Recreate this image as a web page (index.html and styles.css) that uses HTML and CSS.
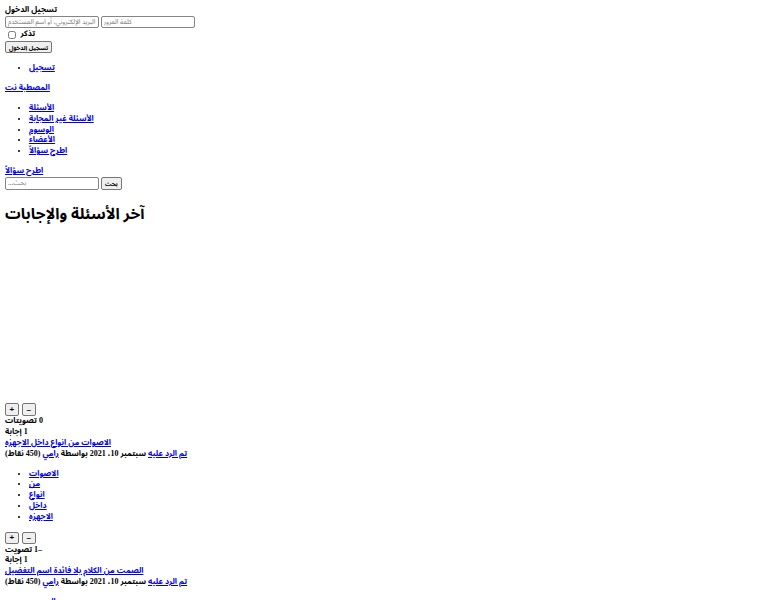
FILE: index.html
```html
<!DOCTYPE html>
<html lang="ar">
<head>
    <meta charset="UTF-8">
    <meta name="viewport" content="width=device-width, initial-scale=1.0">
    <title>آخر الأسئلة والإجابات - المصطبة نت</title>
    <link rel="stylesheet" href="styles.css">
</head>
<body>
    <form class="login-form">
        <div class="login-title">تسجيل الدخول</div>
        <div class="login-fields">
            <input type="text" class="field" placeholder="البريد الإلكتروني، أو اسم المستخدم"><input type="password" class="field" placeholder="كلمة المرور">
        </div>
        <div class="login-remember">
            <input type="checkbox" id="remember" class="check"><label for="remember">تذكر</label>
        </div>
        <div>
            <input type="submit" class="btn" value="تسجيل الدخول">
        </div>
    </form>

    <ul>
        <li><a href="#">تسجيل</a></li>
    </ul>

    <div class="logo"><a href="#">المصطبة نت</a></div>

    <ul>
        <li><a href="#">الأسئلة</a></li>
        <li><a href="#">الأسئلة غير المجابة</a></li>
        <li><a href="#">الوسوم</a></li>
        <li><a href="#">الأعضاء</a></li>
        <li><a href="#">اطرح سؤالاً</a></li>
    </ul>

    <div class="ask"><a href="#">اطرح سؤالاً</a></div>

    <form class="search">
        <input type="text" class="field" placeholder="...بحث"><input type="submit" class="btn" value="بحث">
    </form>

    <h1>آخر الأسئلة والإجابات</h1>

    <!-- ad slot -->
    <div class="ad-slot"></div>

    <div class="q-list">
        <div class="q-item">
            <div class="voting">
                <button class="btn vote">+</button><button class="btn vote">&ndash;</button>
            </div>
            <div><span dir="rtl">0 تصويتات</span></div>
            <div><span dir="rtl">1 إجابة</span></div>
            <div><a href="#">الاصوات من انواع داخل الاجهزه</a></div>
            <div class="meta"><a href="#">تم الرد عليه</a> سبتمبر 10، 2021 بواسطة <a href="#">رامي</a> (450 نقاط)</div>
            <ul>
                <li><a href="#">الاصوات</a></li>
                <li><a href="#">من</a></li>
                <li><a href="#">انواع</a></li>
                <li><a href="#">داخل</a></li>
                <li><a href="#">الاجهزه</a></li>
            </ul>
        </div>

        <div class="q-item">
            <div class="voting">
                <button class="btn vote">+</button><button class="btn vote">&ndash;</button>
            </div>
            <div><span dir="rtl">&ndash;1 تصويت</span></div>
            <div><span dir="rtl">1 إجابة</span></div>
            <div><a href="#">الصمت من الكلام بلا فائدة اسم التفضيل</a></div>
            <div class="meta"><a href="#">تم الرد عليه</a> سبتمبر 10، 2021 بواسطة <a href="#">رامي</a> (450 نقاط)</div>
            <ul>
                <li><a href="#">الصمت</a></li>
                <li><a href="#">من</a></li>
                <li><a href="#">الكلام</a></li>
                <li><a href="#">فائدة</a></li>
                <li><a href="#">التفضيل</a></li>
            </ul>
        </div>
    </div>
</body>
</html>
```

FILE: styles.css
```css
body {
    margin: 5px;
    font-family: "Liberation Serif", "Noto Sans Arabic", serif;
    font-size: 8px;
    line-height: 10.7px;
    font-weight: bold;
}
a {
    color: #0000ee;
}
form {
    margin: 0;
}
ul {
    margin: 9.5px 0;
    padding-left: 24px;
}
h1 {
    font-size: 15.5px;
    line-height: 22px;
    margin: 12.7px 0;
}
.login-fields,
.search {
    display: flex;
    gap: 1.5px;
    height: 13px;
    align-items: flex-start;
}
.field {
    box-sizing: border-box;
    width: 94px;
    height: 12.5px;
    margin: 0;
    padding: 0 2px;
    border: 1px solid #858585;
    border-radius: 2px;
    font-family: "Noto Sans Arabic", sans-serif;
    font-size: 6.5px;
    background: #fff;
}
.field::placeholder {
    color: #757575;
}
.login-remember {
    display: flex;
    align-items: center;
    height: 12px;
}
.check {
    width: 8px;
    height: 8px;
    margin: 0 5px 0 2.5px;
}
.btn {
    box-sizing: border-box;
    height: 12.5px;
    margin: 0;
    padding: 0 3px;
    border: 1px solid #767676;
    border-radius: 2px;
    background: #efefef;
    color: #000;
    font-family: "Noto Sans Arabic", sans-serif;
    font-size: 6px;
    font-weight: bold;
}
.search .btn {
    margin-left: 0.5px;
}
.voting {
    display: flex;
    gap: 3.5px;
    height: 13px;
}
.vote {
    width: 13.5px;
    padding: 0;
    font-family: "Liberation Sans", sans-serif;
    font-size: 8px;
}
.ad-slot {
    height: 166px;
}
```
